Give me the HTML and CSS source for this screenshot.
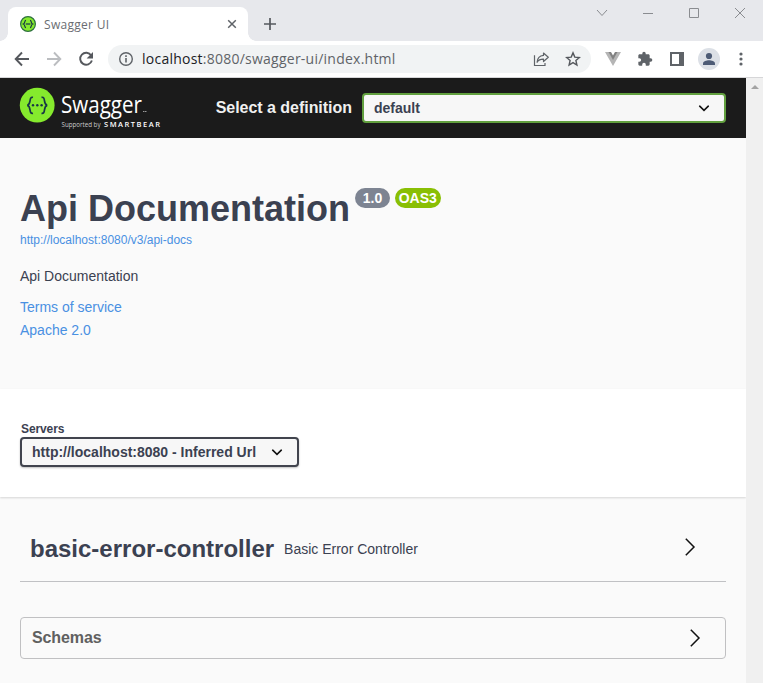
FILE: index.html
```html
<!DOCTYPE html>
<html lang="en">
<head>
<meta charset="utf-8">
<title>Swagger UI</title>
<link rel="stylesheet" href="styles.css">
</head>
<body>
<div class="window">
  <div class="tabstrip">
    <div class="tab">
      <svg class="favicon" width="16" height="16" viewBox="0 0 16 16"><circle cx="8" cy="8" r="7.4" fill="#85ea2d" stroke="#2d6f3f" stroke-width="1.2"/><path d="M6 4.3C4.3 4.1 5.3 7.3 3.4 8C5.3 8.7 4.3 11.9 6 11.7M10 4.3C11.7 4.1 10.7 7.3 12.6 8C10.7 8.7 11.7 11.9 10 11.7" fill="none" stroke="#173647" stroke-width="1.2"/><path d="M5.8 8h4.6" stroke="#173647" stroke-width="1.2"/></svg>
      <span class="tab-title">Swagger UI</span>
      <svg class="tab-close" width="10" height="10" viewBox="0 0 10 10"><path d="M1.2 1.2l7.6 7.6M8.8 1.2L1.2 8.8" stroke="#5f6368" stroke-width="1.5"/></svg>
    </div>
    <svg class="new-tab" width="12" height="12" viewBox="0 0 12 12"><path d="M6 0v12M0 6h12" stroke="#55585d" stroke-width="1.7"/></svg>
    <div class="window-controls">
      <svg width="12" height="12" viewBox="0 0 12 12"><path d="M1 3l5 5.5L11 3" fill="none" stroke="#8a8c90"/></svg>
      <svg width="12" height="12" viewBox="0 0 12 12"><path d="M1 6.5h10" stroke="#8a8c90"/></svg>
      <svg width="12" height="12" viewBox="0 0 12 12"><path d="M1.5 1.5h9v9h-9z" fill="none" stroke="#8a8c90"/></svg>
      <svg width="12" height="12" viewBox="0 0 12 12"><path d="M1 1l10 10M11 1L1 11" stroke="#8a8c90"/></svg>
    </div>
  </div>
  <div class="toolbar">
    <svg class="nav" width="16" height="16" viewBox="0 0 16 16"><path d="M15 8H2M8 1.5L1.7 8L8 14.5" fill="none" stroke="#55585d" stroke-width="1.9"/></svg>
    <svg class="nav" width="16" height="16" viewBox="0 0 16 16"><path d="M1 8h13M8 1.5L14.3 8L8 14.5" fill="none" stroke="#bbbdc0" stroke-width="1.9"/></svg>
    <svg class="nav" width="16" height="16" viewBox="0 0 16 16"><path d="M13.2 4.4A6 6 0 1 0 13.9 9.5" fill="none" stroke="#55585d" stroke-width="1.9"/><path d="M15 1v6.4H8.6z" fill="#55585d"/></svg>
    <div class="omnibox">
      <svg class="info-icon" width="16" height="16" viewBox="0 0 16 16"><circle cx="8" cy="8" r="6.3" fill="none" stroke="#5f6368" stroke-width="1.4"/><path d="M8 7v4.5M8 4.3v1.6" stroke="#5f6368" stroke-width="1.6"/></svg>
      <span class="url"><b>localhost</b>:8080/swagger-ui/index.html</span>
      <svg class="share" width="16" height="16" viewBox="0 0 16 16"><path d="M1.500 4.200v10.300h10.500v-2.500" fill="none" stroke="#5f6368" stroke-width="1.2"/><path d="M10.500 2l4.800 4.300l-4.800 4.200V8.200C7.500 8.100 5.500 9 4.100 11.300C4.400 7.200 6.700 4.800 10.500 4.400z" fill="none" stroke="#5f6368" stroke-width="1.2" stroke-linejoin="round"/></svg>
      <svg width="16" height="16" viewBox="0 0 16 16"><path d="M8 1.9l1.8 4.2l4.6.4l-3.5 3l1 4.5L8 11.6L4.1 14l1-4.5l-3.5-3l4.6-.4z" fill="none" stroke="#55585d" stroke-width="1.4"/></svg>
    </div>
    <svg class="vue" width="16" height="14" viewBox="0 0 16 14"><path d="M0 0h4l4 7l4-7h4L8 14z" fill="#b5b5b5"/><path d="M3.5 0H6l2 3.5L10 0h2.5L8 8z" fill="#828282"/></svg>
    <svg class="puzzle" width="16" height="16" viewBox="0 0 24 24"><path d="M20.5 11H19V7c0-1.1-.9-2-2-2h-4V3.500a2.500 2.500 0 0 0-5 0V5H4c-1.100 0-2 .9-2 2v3.800h1.500a2.700 2.700 0 0 1 0 5.400H2V20c0 1.100.9 2 2 2h3.800v-1.500a2.700 2.700 0 0 1 5.400 0V22H17c1.100 0 2-.9 2-2v-4h1.500a2.500 2.500 0 0 0 0-5z" fill="#5f6368"/></svg>
    <svg class="panel" width="14" height="14" viewBox="0 0 14 14"><path d="M0 0h14v14H0zM2 2v10h7V2z" fill="#5f6368" fill-rule="evenodd"/></svg>
    <svg class="avatar" width="22" height="22" viewBox="0 0 22 22"><circle cx="11" cy="11" r="11" fill="#dce0e6"/><circle cx="11" cy="8" r="3.100" fill="#4d5b75"/><path d="M5 17v-1.500c0-2 3.500-3.200 6-3.200s6 1.200 6 3.200V17z" fill="#4d5b75"/></svg>
    <svg class="more" width="4" height="14" viewBox="0 0 4 14"><circle cx="2" cy="2" r="1.600" fill="#5f6368"/><circle cx="2" cy="7" r="1.600" fill="#5f6368"/><circle cx="2" cy="12" r="1.600" fill="#5f6368"/></svg>
  </div>
  <div class="viewport">
    <main class="page">
      <header class="topbar">
        <svg class="logo" width="142" height="44" viewBox="0 0 142 44">
          <circle cx="17.200" cy="17.200" r="17.400" fill="#85ea2d"/>
          <g fill="none" stroke="#173647" stroke-width="1.700"><path d="M13 9.300C8.300 8.500 11.700 16.300 7.300 17.300C11.700 18.300 8.300 26.100 13 25.300"/><path d="M21.500 9.300C26.200 8.500 22.800 16.300 27.200 17.300C22.800 18.300 26.200 26.100 21.500 25.300"/></g>
          <g fill="#173647"><circle cx="13" cy="17.300" r="1.200"/><circle cx="17.300" cy="17.300" r="1.200"/><circle cx="21.600" cy="17.300" r="1.200"/></g>
          <text class="logo-name" x="41" y="24.500" textLength="81" lengthAdjust="spacingAndGlyphs">Swagger</text>
          <path d="M123 23.500h1.500M125 23.500h1.500" stroke="#bbb" stroke-width=".8"/>
          <text class="logo-by" x="41.500" y="38.700" textLength="39" lengthAdjust="spacingAndGlyphs">Supported by</text>
          <text class="logo-brand" x="84" y="38.500" textLength="56">SMARTBEAR</text>
        </svg>
        <span class="definition-label">Select a definition</span>
        <div class="select definition"><span>default</span><svg width="20" height="20" viewBox="0 0 20 20"><path d="M5.700 8.200L10 12.300l4.300-4.100" fill="none" stroke="#111" stroke-width="1.600" stroke-linecap="round"/></svg></div>
      </header>
      <section class="info">
        <h1>Api Documentation<span class="badges"><span class="badge">1.0</span><span class="badge oas">OAS3</span></span></h1>
        <a class="spec-url">http://localhost:8080/v3/api-docs</a>
        <p class="description">Api Documentation</p>
        <a class="meta-link">Terms of service</a>
        <a class="meta-link">Apache 2.0</a>
      </section>
      <section class="servers">
        <span class="servers-title">Servers</span>
        <div class="select server"><span>http://localhost:8080 - Inferred Url</span><svg width="20" height="20" viewBox="0 0 20 20"><path d="M5.700 8.200L10 12.300l4.300-4.100" fill="none" stroke="#111" stroke-width="1.600" stroke-linecap="round"/></svg></div>
      </section>
      <section class="tag">
        <h2>basic-error-controller</h2>
        <span class="tag-text">Basic Error Controller</span>
        <svg class="arrow" width="20" height="20" viewBox="0 0 20 20"><path d="M5.800 1.700L14 10l-8.200 8.300" fill="none" stroke="#111" stroke-width="1.500"/></svg>
      </section>
      <section class="schemas">
        <h3>Schemas</h3>
        <svg class="arrow" width="20" height="20" viewBox="0 0 20 20"><path d="M5.800 1.700L14 10l-8.200 8.300" fill="none" stroke="#111" stroke-width="1.500"/></svg>
      </section>
    </main>
    <div class="scrollbar"><svg width="8" height="4" viewBox="0 0 8 4"><path d="M0 4L4 0l4 4z" fill="#a3a3a3"/></svg></div>
  </div>
</div>
</body>
</html>
```

FILE: styles.css
```css
* { box-sizing: border-box; }
body { margin: 0; font-family: "Liberation Sans", sans-serif; color: #3b4151; }
svg { display: block; flex: none; }
h1, h2, h3, p { margin: 0; }
.window { width: 763px; height: 683px; display: flex; flex-direction: column; overflow: hidden; }

.tabstrip { height: 41px; flex: none; display: flex; background: #e7e8ec; }
.tab { position: relative; width: 240px; height: 34px; margin: 7px 0 0 8px; padding: 0 11px 0 12px; display: flex; align-items: center; background: #fff; border-radius: 8px 8px 0 0; }
.tab::before, .tab::after { content: ""; position: absolute; bottom: 0; width: 8px; height: 8px; }
.tab::before { left: -8px; background: radial-gradient(circle at 0 0, transparent 7.500px, #fff 8px); }
.tab::after { right: -8px; background: radial-gradient(circle at 100% 0, transparent 7.500px, #fff 8px); }
.tab-title { margin-left: 8px; padding-top: 2px; font: 12px/16px "Open Sans", sans-serif; letter-spacing: .3px; color: #6a6d72; }
.tab-close { margin-left: auto; }
.new-tab { margin: 18px 0 0 16px; }
.window-controls { display: flex; gap: 34px; margin: 7px 17px 0 auto; }

.toolbar { height: 37px; flex: none; display: flex; align-items: center; padding-left: 14px; background: #fff; border-bottom: 1px solid #d6d6d8; }
.nav { margin-right: 16px; }
.omnibox { width: 483px; height: 28px; margin-left: -2px; padding: 0 10px; display: flex; align-items: center; border-radius: 14px; background: #f1f3f4; }
.url { margin-left: 8px; font: 14px/20px "Open Sans", sans-serif; letter-spacing: .24px; color: #5f6368; white-space: nowrap; }
.url b { font-weight: 400; color: #202124; }
.share { margin: 0 16px 0 auto; }
.vue { margin-left: 14px; }
.puzzle { margin-left: 16px; }
.panel { margin-left: 17px; }
.avatar { margin-left: 14px; }
.more { margin-left: 19px; }

.viewport { flex: 1; display: flex; min-height: 0; }
.page { width: 746px; background: #fafafa; }
.scrollbar { width: 17px; padding: 7px 0 0 5px; background: #f0f0f0; }

.topbar { height: 60px; padding: 0 20px; display: flex; align-items: center; background: #1b1b1b; }
.logo { margin-top: 4px; overflow: visible; }
.logo text { font-family: "Open Sans", sans-serif; fill: #fff; }
.logo .logo-name { font-size: 23px; }
.logo .logo-by { font-size: 6.500px; fill: #ccc; }
.logo .logo-brand { font-size: 7.500px; font-weight: 600; }
.definition-label { margin: 0 10px 0 auto; font-size: 16px; font-weight: 700; letter-spacing: -.03px; color: #f0f0f0; }
.select { height: 30px; display: flex; align-items: center; justify-content: space-between; padding: 0 10px; border: 2px solid #41444e; border-radius: 4px; background: #f7f7f7; font-size: 14px; font-weight: 700; }
.definition { width: 364px; border-color: #62a03f; }

.info { height: 251px; padding: 50px 20px 0; display: flex; flex-direction: column; align-items: flex-start; }
h1 { display: flex; font-size: 36px; line-height: 41px; white-space: nowrap; }
.badges { display: flex; gap: 5px; margin-left: 5px; }
.badge { height: 20px; padding: 0 7.750px; border-radius: 10px; background: #7d8492; color: #fff; font-size: 14px; line-height: 20px; }
.oas { padding: 0 3.750px; background: #89bf04; }
.spec-url { margin-top: 4px; font-size: 12px; line-height: 14px; color: #4990e2; }
.description { margin-top: 21px; font-size: 14px; line-height: 16px; }
.meta-link { margin-top: 7px; font-size: 14px; line-height: 16px; color: #4990e2; }
.description + .meta-link { margin-top: 15px; }

.servers { height: 108px; padding: 33px 20px 0; background: #fff; box-shadow: 0 1px 2px rgba(0, 0, 0, .15); }
.servers-title { display: block; margin: 0 0 1px 1px; font-size: 12px; font-weight: 700; line-height: 14px; letter-spacing: -.1px; }
.server { width: 279px; box-shadow: 0 1px 2px rgba(0, 0, 0, .25); }

.tag { height: 65px; margin: 20px 20px 0; padding: 0 26px 4px 10px; display: flex; align-items: center; border-bottom: 1px solid #c0c1c4; }
h2 { padding-top: 3px; font-size: 24px; line-height: 28px; }
.tag-text { margin-left: 10px; padding-top: 4px; font-size: 14px; }
.arrow { margin-left: auto; }
.schemas { height: 42px; margin: 35px 20px 0; padding: 0 20px 0 11px; display: flex; align-items: center; border: 1px solid #c0c0c2; border-radius: 4px; }
h3 { font-size: 16px; line-height: 18px; letter-spacing: -.1px; color: #606060; }
```
